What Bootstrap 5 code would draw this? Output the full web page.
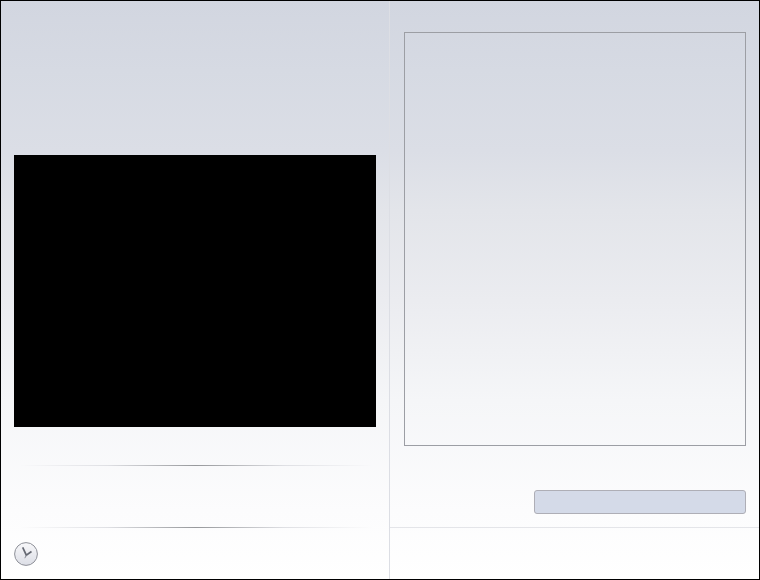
<!DOCTYPE html>
<html lang="en">
<head>
  <meta charset="UTF-8">
  <title>Player</title>
  <link href="https://cdn.jsdelivr.net/npm/bootstrap@5.3.0/dist/css/bootstrap.min.css" rel="stylesheet">
  <style>
    html, body { height: 100%; }
    body { background: #fff; overflow: hidden; font-family: "Liberation Sans", sans-serif; }
    .app-frame {
      width: 760px; height: 580px; border: 1px solid #000;
      background: linear-gradient(180deg, #d2d6e0 0, #d6dae3 70px, #dbdee6 150px, #e3e5ea 210px, #ebecf0 300px, #f5f6f8 400px, #fcfcfd 510px, #fff 580px);
    }
    .left-pane { width: 389px; border-right: 1px solid #dcdee4; }
    .video-box { height: 272px; margin: 154px 13px 0 13px; background: #000; }
    .fade-line { height: 1px; margin-left: 18px; margin-right: 16px; background: linear-gradient(90deg, rgba(150,152,155,0), #dfe0e4 25%, #97999c 50%, #dfe0e4 75%, rgba(150,152,155,0)); }
    .line-one { margin-top: 38px; }
    .line-two { margin-top: 61px; }
    .clock-btn { width: 24px; height: 24px; margin: 14px 0 0 13px; }
    .list-box { height: 414px; margin: 31px 13px 0 14px; border: 1px solid #9c9ea4; }
    .action-btn { width: 212px; height: 24px; margin: 44px 13px 0 auto; padding: 0; display: block; background: #d4dae8; border: 1px solid #aeaeb6; border-radius: 3px; }
    .foot-rule { margin-top: 13px; border-top: 1px solid #e4e5e9; }
  </style>
</head>
<body>
  <div class="app-frame d-flex">
    <div class="left-pane flex-shrink-0">
      <div class="video-box"></div>
      <div class="fade-line line-one"></div>
      <div class="fade-line line-two"></div>
      <div class="clock-btn">
        <svg width="24" height="24" viewBox="0 0 24 24" class="d-block">
          <defs>
            <linearGradient id="clockFill" x1="0" y1="0" x2="0" y2="1">
              <stop offset="0" stop-color="#f8f8fa"/>
              <stop offset="1" stop-color="#dcdee6"/>
            </linearGradient>
          </defs>
          <circle cx="12" cy="12" r="11.4" fill="url(#clockFill)" stroke="#8e9098" stroke-width="1"/>
          <path d="M8.7 5.3 L12.3 13.2 L17.5 9.5" fill="none" stroke="#666973" stroke-width="1.7"/>
          <path d="M12.3 13.2 L10.8 16.2" fill="none" stroke="#8a8d96" stroke-width="1"/>
        </svg>
      </div>
    </div>
    <div class="flex-grow-1">
      <div class="list-box"></div>
      <button type="button" class="action-btn"></button>
      <div class="foot-rule"></div>
    </div>
  </div>
  <script src="https://cdn.jsdelivr.net/npm/bootstrap@5.3.0/dist/js/bootstrap.bundle.min.js"></script>
</body>
</html>
